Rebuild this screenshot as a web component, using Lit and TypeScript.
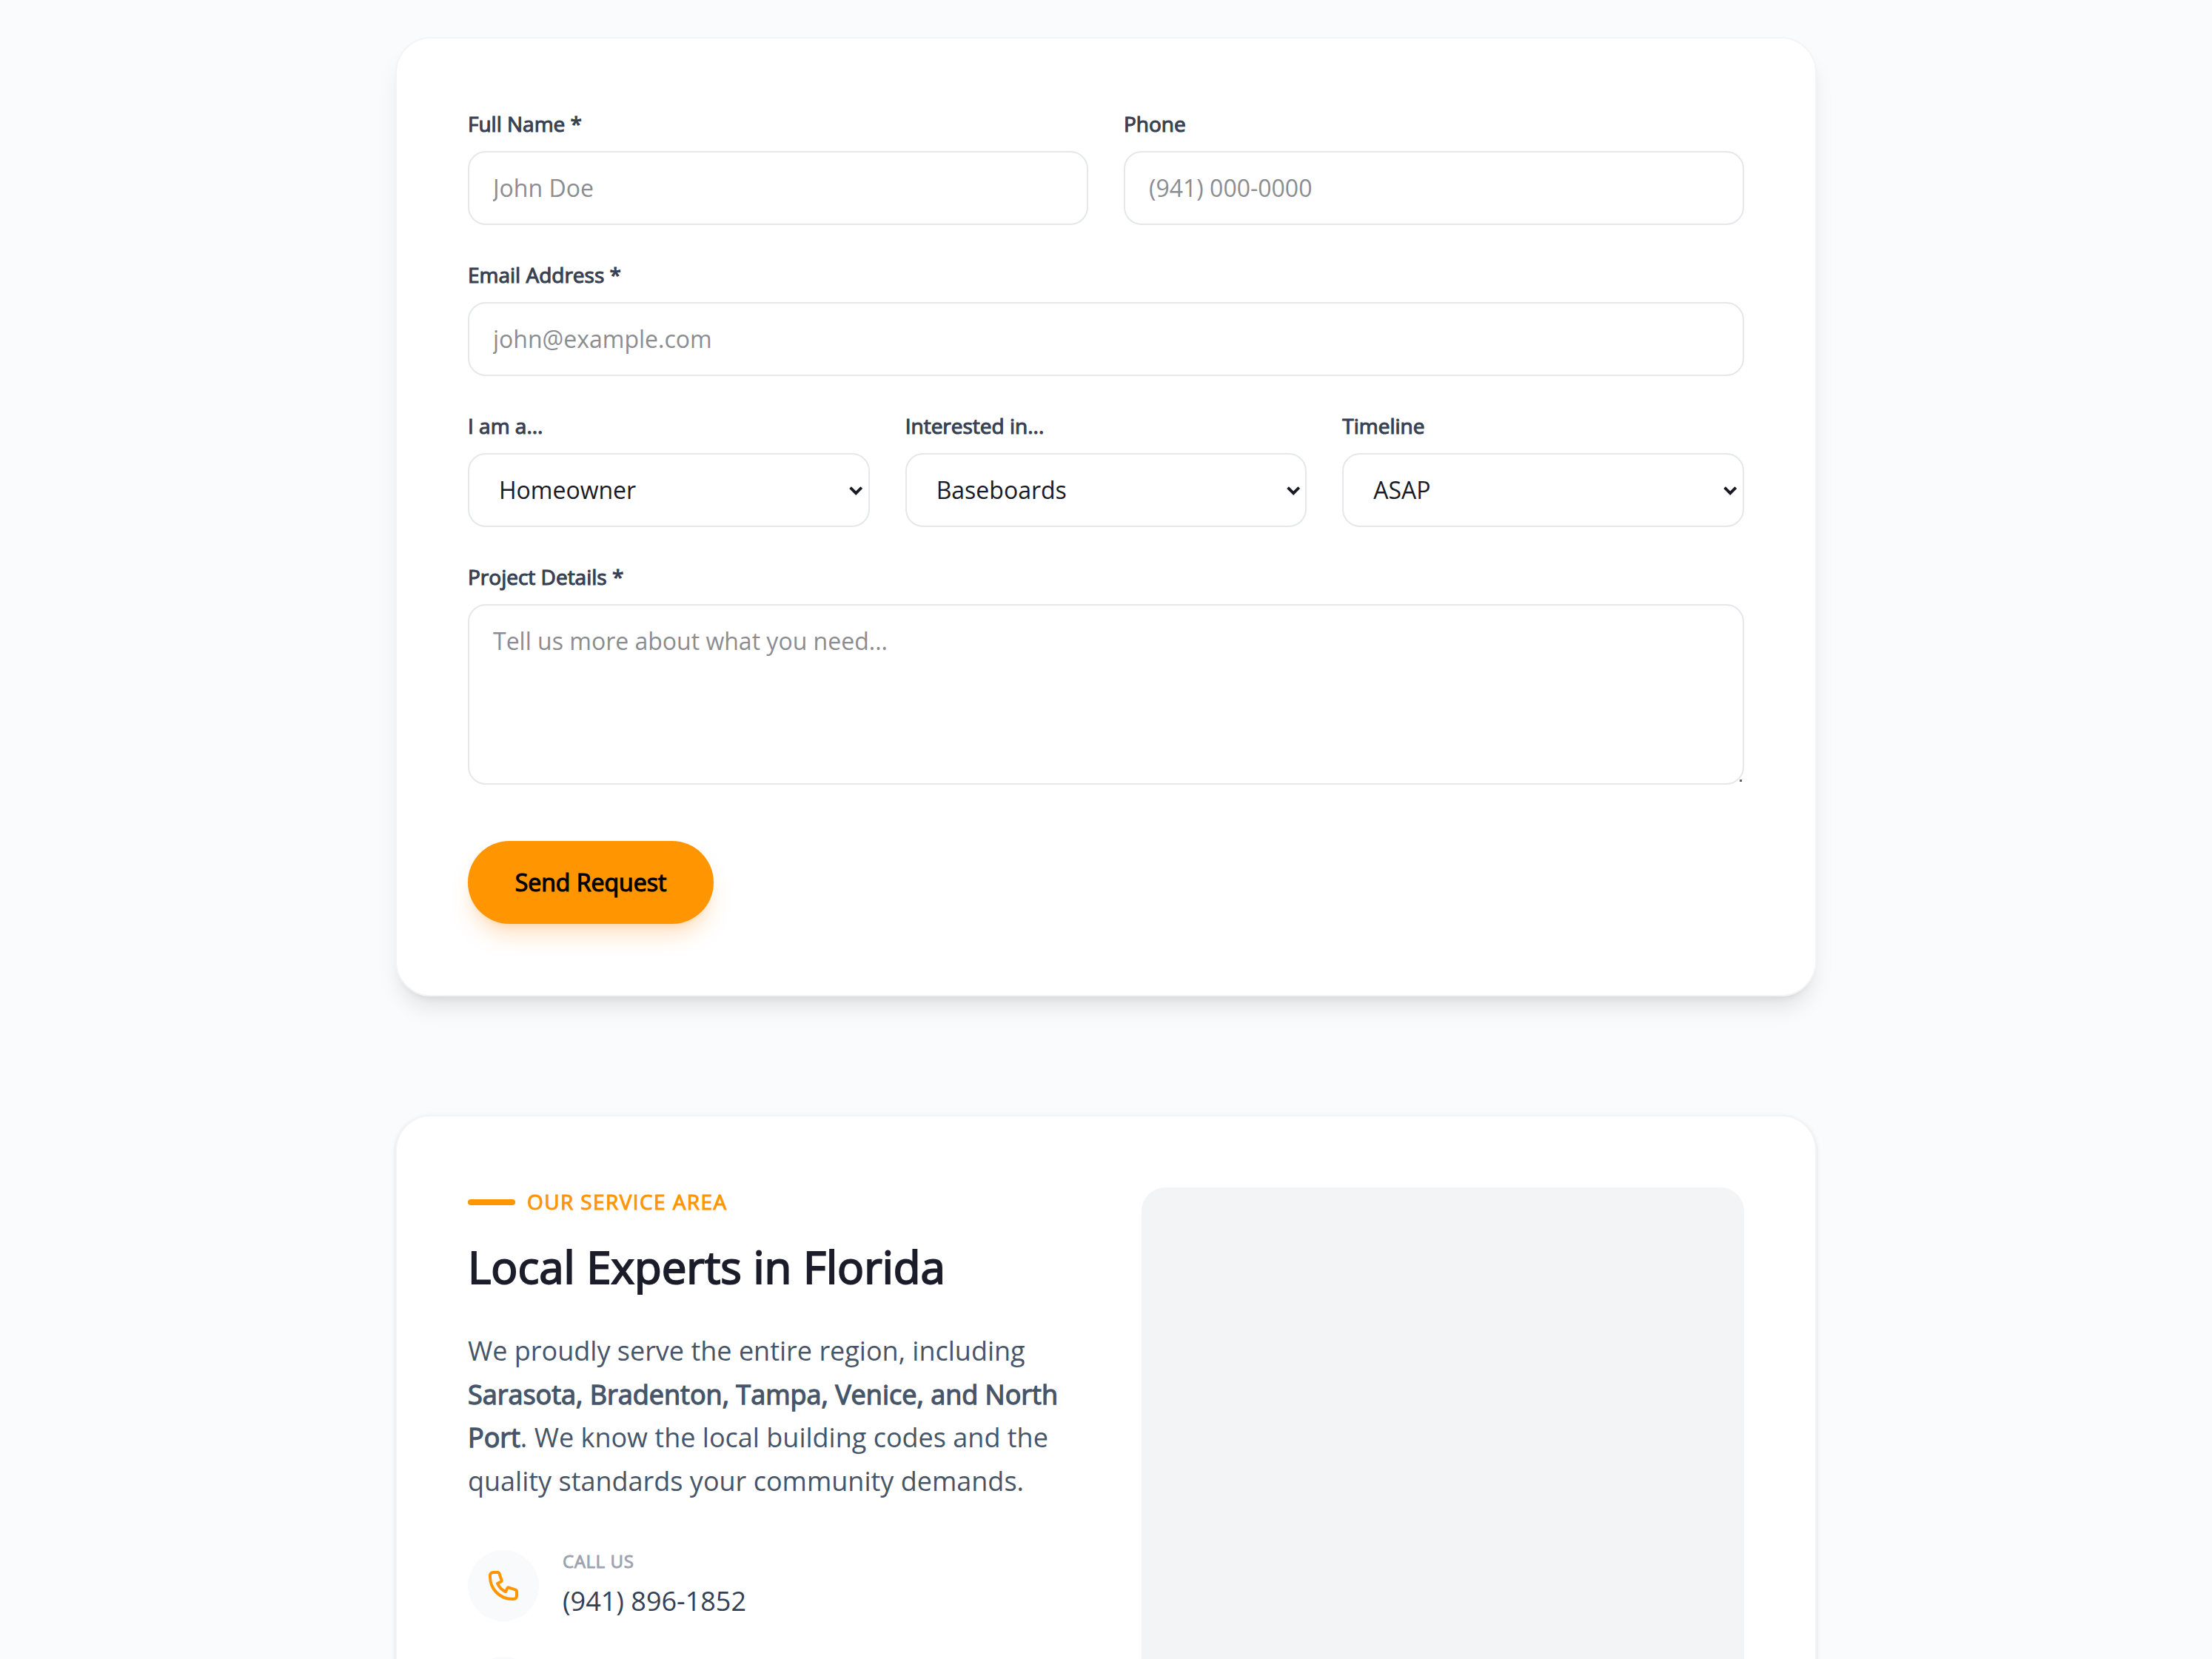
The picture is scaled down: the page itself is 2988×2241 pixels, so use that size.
import { LitElement, html, css } from "lit";
import { customElement } from "lit/decorators.js";

@customElement("quote-form")
class QuoteForm extends LitElement {
  static styles = css`
    :host { display: block; }
    * { box-sizing: border-box; }
    .card {
      background: #fff;
      border: 1px solid #f3f4f6;
      border-radius: 24px;
      padding: 48px;
      height: 648px;
      box-shadow: 0 10px 15px -3px rgba(0, 0, 0, 0.1), 0 4px 6px -4px rgba(0, 0, 0, 0.1);
    }
    .form { display: flex; flex-direction: column; gap: 24px; align-items: stretch; }
    .row { display: grid; gap: 24px; }
    .two { grid-template-columns: repeat(2, minmax(0, 1fr)); }
    .three { grid-template-columns: repeat(3, minmax(0, 1fr)); }
    .label {
      display: block;
      font-size: 14px;
      line-height: 19px;
      margin-bottom: 9px;
      color: #374151;
      -webkit-text-stroke: 0.55px #374151;
    }
    .field { position: relative; }
    .control {
      display: block;
      width: 100%;
      height: 50px;
      border: 1px solid #e5e7eb;
      border-radius: 12px;
      padding: 0 16px 1px;
      background: #fff;
      color: #181a24;
      font: 400 16px "Open Sans", sans-serif;
      outline: none;
      margin: 0;
    }
    .control::placeholder { color: #8b8d91; opacity: 1; }
    .select { appearance: none; padding-left: 20px; }
    .arrow {
      position: absolute;
      right: 4.6px;
      top: 22.3px;
      width: 9.2px;
      height: 6px;
      pointer-events: none;
    }
    .area { height: 122px; padding: 12px 16px; line-height: 24px; resize: none; }
    .grip {
      position: absolute;
      right: 1.5px;
      bottom: 2px;
      width: 1.5px;
      height: 1.5px;
      background: #666;
    }
    .send {
      align-self: flex-start;
      margin-top: 14px;
      width: 166px;
      height: 56px;
      border: 0;
      border-radius: 28px;
      background: #ff9500;
      color: #000;
      font: 400 16px "Open Sans", sans-serif;
      -webkit-text-stroke: 0.6px #000;
      padding: 0 0 1px;
      box-shadow: 0 10px 15px -3px rgba(255, 140, 10, 0.25), 0 4px 6px -4px rgba(255, 140, 10, 0.25);
    }
  `;
  private select(label: string, value: string) {
    return html`<div>
      <label class="label">${label}</label>
      <div class="field">
        <select class="control select"><option>${value}</option></select>
        <svg class="arrow" viewBox="0 0 9.2 6" fill="none" stroke="#181a24" stroke-width="1.9" stroke-linecap="butt">
          <path d="M0.8 0.8L4.6 4.6L8.4 0.8" />
        </svg>
      </div>
    </div>`;
  }
  render() {
    return html`<section class="card">
      <div class="form">
        <div class="row two">
          <div><label class="label">Full Name *</label><input class="control" placeholder="John Doe" /></div>
          <div><label class="label">Phone</label><input class="control" placeholder="(941) 000-0000" /></div>
        </div>
        <div><label class="label">Email Address *</label><input class="control" placeholder="john@example.com" /></div>
        <div class="row three">
          ${this.select("I am a...", "Homeowner")}
          ${this.select("Interested in...", "Baseboards")}
          ${this.select("Timeline", "ASAP")}
        </div>
        <div>
          <label class="label">Project Details *</label>
          <div class="field">
            <textarea class="control area" placeholder="Tell us more about what you need..."></textarea>
            <span class="grip"></span>
          </div>
        </div>
        <button class="send">Send Request</button>
      </div>
    </section>`;
  }
}

@customElement("service-area")
class ServiceArea extends LitElement {
  static styles = css`
    :host { display: block; }
    * { box-sizing: border-box; }
    .card {
      display: grid;
      grid-template-columns: repeat(2, minmax(0, 1fr));
      gap: 48px;
      background: #fff;
      border: 1px solid #f3f4f6;
      border-radius: 24px;
      padding: 48px;
      box-shadow: 0 1px 3px rgba(0, 0, 0, 0.1), 0 1px 2px -1px rgba(0, 0, 0, 0.1);
    }
    .tag { display: flex; align-items: center; gap: 8px; height: 20px; }
    .bar { width: 32px; height: 4px; border-radius: 2px; background: #ff9500; }
    .tagtext {
      font-size: 14px;
      line-height: 19px;
      padding-bottom: 1px;
      letter-spacing: 0.7px;
      color: #ff9500;
      -webkit-text-stroke: 0.5px #ff9500;
    }
    .title {
      margin: 11.5px 0 0;
      font-size: 30px;
      line-height: 44px;
      font-weight: 400;
      color: #1b1d2a;
      -webkit-text-stroke: 1px #1b1d2a;
    }
    .copy { margin: 20.5px 0 0; font-size: 18px; line-height: 29.25px; color: #475569; }
    .strong { font-weight: 400; -webkit-text-stroke: 0.65px #475569; }
    .contacts { display: flex; flex-direction: column; gap: 24px; margin-top: 32px; }
    .contact { display: flex; gap: 16px; align-items: center; height: 48px; }
    .badge {
      flex: none;
      width: 48px;
      height: 48px;
      border-radius: 50%;
      background: #f9fafb;
      display: flex;
      align-items: center;
      justify-content: center;
      color: #ff9500;
    }
    .icon { width: 24px; height: 24px; display: block; }
    .caption {
      font-size: 12px;
      line-height: 16px;
      margin-bottom: 5px;
      letter-spacing: 0.3px;
      color: #9ca3af;
      -webkit-text-stroke: 0.45px #9ca3af;
    }
    .value { font-size: 18px; line-height: 28px; color: #334155; }
    .map { height: 450px; border-radius: 16px; background: #f3f4f6; }
  `;
  render() {
    return html`<section class="card">
      <div>
        <div class="tag"><span class="bar"></span><span class="tagtext">OUR SERVICE AREA</span></div>
        <h2 class="title">Local Experts in Florida</h2>
        <p class="copy">We proudly serve the entire region, including <strong class="strong">Sarasota, Bradenton, Tampa, Venice, and North Port</strong>. We know the local building codes and the quality standards your community demands.</p>
        <div class="contacts">
          <div class="contact">
            <span class="badge">
              <svg class="icon" viewBox="0 0 24 24" fill="none" stroke="currentColor" stroke-width="2" stroke-linecap="round" stroke-linejoin="round">
                <path d="M3 5a2 2 0 012-2h3.28a1 1 0 01.948.684l1.498 4.493a1 1 0 01-.502 1.21l-2.257 1.13a11.042 11.042 0 005.516 5.516l1.13-2.257a1 1 0 011.21-.502l4.493 1.498a1 1 0 01.684.949V19a2 2 0 01-2 2h-1C9.716 21 3 14.284 3 6V5z" />
              </svg>
            </span>
            <div>
              <div class="caption">CALL US</div>
              <div class="value">(941) 896-1852</div>
            </div>
          </div>
          <div class="contact"><span class="badge"></span></div>
        </div>
      </div>
      <div class="map"></div>
    </section>`;
  }
}

@customElement("app-root")
class AppRoot extends LitElement {
  static styles = css`
    :host {
      display: block;
      zoom: 2;
      height: 1120.5px;
      overflow: hidden;
      background: #fafbfd;
      font-family: "Open Sans", sans-serif;
    }
    .page {
      display: flex;
      flex-direction: column;
      gap: 80px;
      width: 960px;
      margin: 0 auto;
      padding-top: 25px;
    }
  `;
  render() {
    return html`<main class="page"><quote-form></quote-form><service-area></service-area></main>`;
  }
}
